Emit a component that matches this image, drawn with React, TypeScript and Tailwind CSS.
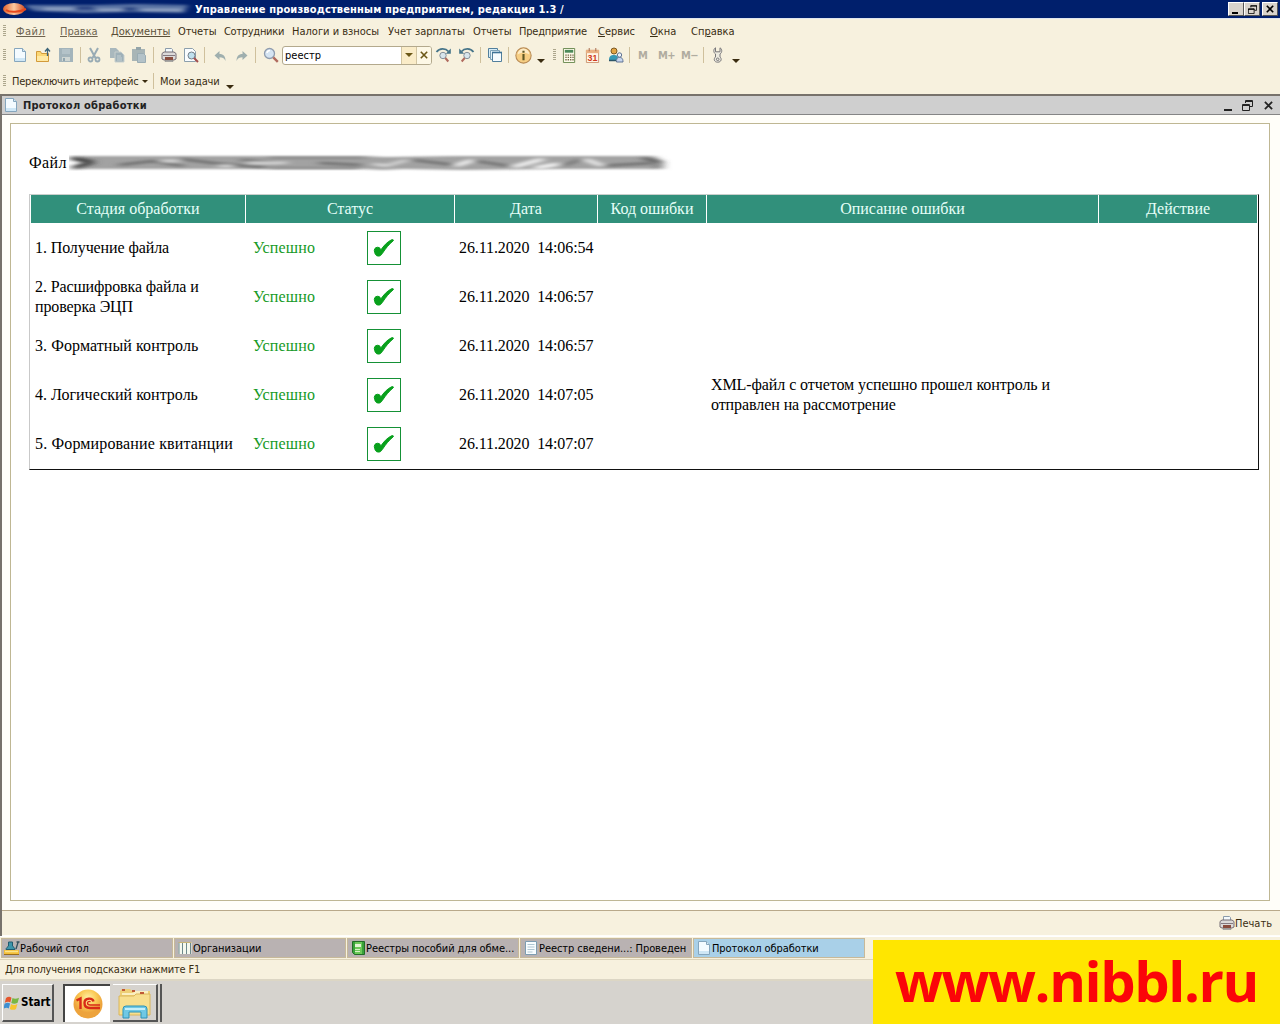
import type { ReactNode } from "react";
import clsx from "clsx";

const stages = [
  { name: "1. Получение файла", time: "14:06:54", tracking: "tracking-[-0.1px]" },
  { name: "2. Расшифровка файла и проверка ЭЦП", time: "14:06:57", tracking: "tracking-[-0.12px]" },
  { name: "3. Форматный контроль", time: "14:06:57", tracking: "tracking-[0.08px]" },
  {
    name: "4. Логический контроль",
    time: "14:07:05",
    tracking: "tracking-normal",
    note: "XML-файл с отчетом успешно прошел контроль и отправлен на рассмотрение",
  },
  { name: "5. Формирование квитанции", time: "14:07:07", tracking: "tracking-[0.15px]" },
];

const columns = ["Стадия обработки", "Статус", "Дата", "Код ошибки", "Описание ошибки", "Действие"];

const grid = "grid grid-cols-[216px_209px_143px_109px_392px_159px]";

function Svg({ children, size = 16 }: { children: ReactNode; size?: number }) {
  return (
    <svg width={size} height={size} viewBox="0 0 16 16" fill="none" className="shrink-0">
      {children}
    </svg>
  );
}

function PageIcon() {
  return (
    <Svg>
      <path d="M2.500 1.500h8l3 3v10h-11z" fill="#f4fbff" stroke="#86a6bd" />
      <path d="M3 11h10v3H3z" fill="#cfe7f6" />
      <path d="M10.500 1.500v3h3" fill="#d5e9f5" stroke="#86a6bd" />
    </Svg>
  );
}

function OpenIcon() {
  return (
    <Svg>
      <path d="M1.500 14.500v-10h4l1 2h7v8z" fill="#fbd774" stroke="#d29a3a" />
      <path d="M2 9h11v5H2z" fill="#ffe9a3" />
      <path d="M12.500 9V2M10 4.500l2.500-3 2.500 3" stroke="#3c6478" strokeWidth="1.300" />
    </Svg>
  );
}

function SaveIcon() {
  return (
    <Svg>
      <path d="M1 1h14v14H1z" fill="#a3b4bb" />
      <path d="M4 2h8v5H4z" fill="#b3c2c8" />
      <path d="M4 10h8v4H4z" fill="#cfd6d3" />
      <path d="M5 11h2v3H5z" fill="#91a5ae" />
    </Svg>
  );
}

function CutIcon() {
  return (
    <Svg>
      <path d="M4 1l5.500 10M12 1L6.500 11" stroke="#98abb4" strokeWidth="2" />
      <circle cx="4.500" cy="12.500" r="2" stroke="#98abb4" strokeWidth="1.800" />
      <circle cx="11.500" cy="12.500" r="2" stroke="#98abb4" strokeWidth="1.800" />
    </Svg>
  );
}

function CopyIcon() {
  return (
    <Svg>
      <path d="M1 1h6l3 3v7H1z" fill="#a9b8bd" />
      <path d="M6 5h6l3 3v7H6z" fill="#9eb0b8" stroke="#c7cfcd" />
      <path d="M8 9h4M8 11h5M8 13h5" stroke="#c4d0d3" />
    </Svg>
  );
}

function PasteIcon() {
  return (
    <Svg>
      <path d="M1 2h13v12H1z" fill="#a8b5b6" />
      <path d="M5 0h5v3H5z" fill="#93a4a9" />
      <path d="M6.500 6.500h6l2 2v7h-8z" fill="#b3c2c8" stroke="#9aacb3" />
    </Svg>
  );
}

function PrintIcon() {
  return (
    <Svg>
      <path d="M4.500 6V1.500h6l1 1V6" fill="#f4fafc" stroke="#8b9baa" />
      <path d="M1 6.500l2-1.500h10l2 1.500V12l-2 1H3l-2-1z" fill="#dcdad9" stroke="#756c74" />
      <path d="M2 8.500h12" stroke="#857a80" />
      <path d="M4 10h8v3H4z" fill="#8a4d3e" />
      <path d="M4 13.500h8v1H4z" fill="#eee" stroke="#777" strokeWidth=".6" />
    </Svg>
  );
}

function PreviewIcon() {
  return (
    <Svg>
      <path d="M1.500 1.500h8l3 3v10h-11z" fill="#fafdff" stroke="#8c9fac" />
      <circle cx="8.500" cy="8.500" r="3.500" fill="#bfe0ee" stroke="#767f88" />
      <path d="M11 11l4 4" stroke="#a34e4e" strokeWidth="2" />
    </Svg>
  );
}

function UndoIcon({ flip = false }: { flip?: boolean }) {
  return (
    <svg width="13" height="13" viewBox="0 0 13 13" className={clsx(flip && "-scale-x-100")}>
      <path d="M0.500 6.500L5.500 2v3c4 0 6 2.500 6 7-1.500-3-3-3.700-6-3.700V11z" fill="#9fafae" />
    </svg>
  );
}

function SearchIcon() {
  return (
    <Svg>
      <circle cx="6.500" cy="6.500" r="5" fill="#d5e4f2" stroke="#8f9cae" strokeWidth="1.300" />
      <path d="M4 6a3 3 0 0 1 3-2.500" stroke="#fff" strokeWidth="1.500" />
      <path d="M10.300 10.300l4.500 4.500" stroke="#b06a5e" strokeWidth="2.400" />
    </Svg>
  );
}

function FindIcon({ back = false }: { back?: boolean }) {
  return (
    <svg width="17" height="16" viewBox="0 0 17 16" fill="none" className={clsx(back && "-scale-x-100")}>
      <path d="M1.500 5c3-4 9-4 12-.5" stroke="#47758a" strokeWidth="1.800" />
      <path d="M15.800 1.500v5.300h-5z" fill="#47758a" />
      <circle cx="8" cy="8.500" r="3.200" fill="#d7e5ec" stroke="#85909a" />
      <path d="M10.300 11l3 3.500" stroke="#b06a5e" strokeWidth="2" />
    </svg>
  );
}

function WindowsIcon() {
  return (
    <Svg>
      <path d="M1.500 1.500h9v9h-9z" fill="#d7edf8" stroke="#527f9c" />
      <path d="M3.500 3.500h9v9h-9z" fill="#e4f4fb" stroke="#7fa3b9" />
      <path d="M5.500 5.500h9v9h-9z" fill="#f7fcff" stroke="#527f9c" />
      <path d="M5 5.500h10" stroke="#3e7397" strokeWidth="1.600" />
    </Svg>
  );
}

function InfoIcon() {
  return (
    <Svg size={17}>
      <circle cx="8" cy="8" r="7.200" fill="#f6ce83" stroke="#b78a55" />
      <path d="M2.500 7a5.500 5.500 0 0 1 11 0c-3-2-8-2-11 0z" fill="#fdebc5" />
      <path d="M7 3.500h2v2H7zM7 6.500h2v6H7z" fill="#5e5623" />
    </Svg>
  );
}

function CalcIcon() {
  return (
    <Svg size={15}>
      <path d="M1.500.5h12v15h-12z" fill="#fdfbe9" stroke="#66864d" />
      <path d="M3 2h9v3H3z" fill="#4b8a59" />
      <path d="M3.500 7.500h9M3.500 10h9M3.500 12.500h9" stroke="#78694a" strokeWidth="1.400" strokeDasharray="1.500 1" />
    </Svg>
  );
}

function CalendarIcon() {
  return (
    <Svg size={15}>
      <path d="M1.500 2.500h13v13h-13z" fill="#fff6e7" stroke="#cb9471" />
      <path d="M1 2h14v3.500H1z" fill="#e9b184" />
      <path d="M4.500 0v3.500M11.500 0v3.500" stroke="#a5674a" />
      <text x="8" y="14" textAnchor="middle" fill="#d03a20" className="font-['Liberation_Sans',sans-serif] text-[9.500px] font-bold">
        31
      </text>
    </Svg>
  );
}

function UsersIcon() {
  return (
    <Svg>
      <circle cx="6" cy="4" r="3" fill="#e3a544" stroke="#7b5925" />
      <path d="M1 13c0-4 2-5 5-5s4 1 4 3v2z" fill="#3698b4" />
      <path d="M1 13.500h7" stroke="#2c5568" strokeWidth="1.500" />
      <circle cx="11.500" cy="8" r="2.200" fill="#edf2fa" stroke="#5f7392" />
      <path d="M8.500 15c0-4 1-4.500 3-4.500s3.500.5 3.500 4.500z" fill="#c7d6ef" stroke="#5f7392" />
    </Svg>
  );
}

function WrenchIcon() {
  return (
    <Svg>
      <path
        d="M5.500.8v4h4.500v-4c2 1 2.600 4.500 0 6.200v3c2 1.600 1.500 5.200-2.300 5.200S3.400 11.600 5.500 10V7C3 5.300 3.500 1.800 5.500.8z"
        fill="#eceadf"
        stroke="#78777a"
      />
      <circle cx="7.700" cy="12.300" r="1.300" stroke="#78777a" />
    </Svg>
  );
}

function RegisterIcon() {
  return (
    <Svg>
      <path d="M2.500 1.500h12v13h-10l-2-2z" fill="#39a23b" stroke="#236c28" />
      <path d="M5 2h7v12H5z" fill="#6cca59" />
      <path d="M5 4h6v3H5z" fill="#e2f5d4" />
      <path d="M5 9.500h5M5 11.500h5" stroke="#d6f2c6" />
    </Svg>
  );
}

function ListIcon() {
  return (
    <Svg>
      <path d="M2.500 1.500h11v13h-11z" fill="#f8fdff" stroke="#7d9db2" />
      <path d="M4.500 4.500h7M4.500 7h7M4.500 9.500h7M4.500 12h5" stroke="#afc6d2" />
    </Svg>
  );
}

function ColumnsIcon() {
  return (
    <Svg>
      <path d="M1.500 2h13v12h-13z" fill="#f5f9ee" />
      <path d="M2 2v12M5.500 2v12M9.500 2v12M13.500 2v12" stroke="#6e8a8c" />
      <path d="M1.500 2.500h13" stroke="#c8b475" />
    </Svg>
  );
}

function DesktopIcon() {
  return (
    <Svg>
      <path d="M0 10h15v4.500H0z" fill="#f3be38" />
      <path d="M0 14.500h15" stroke="#996d1c" />
      <path d="M1 11.500h13" stroke="#fae48d" strokeWidth="1.500" />
      <path d="M2 9.500c0-2 2-2.500 2.500-3.500V2h4v4c.5 1 2.500 1.500 2.500 3.500z" fill="#3c95ab" stroke="#205a6f" />
      <path d="M12 9l2-6.500M12.500 2h3" stroke="#35505e" strokeWidth="1.300" />
    </Svg>
  );
}

function Restore({ size }: { size: number }) {
  return (
    <svg width={size} height={size} viewBox="0 0 11 11" fill="none" stroke="currentColor">
      <path d="M3.500 3V.500h7v6H8M3 1.500h8" />
      <path d="M.500 4.500h7v6h-7zM0 5.500h8" />
    </svg>
  );
}

function Cross({ size }: { size: number }) {
  return (
    <svg width={size} height={size} viewBox="0 0 10 10" stroke="currentColor" strokeWidth="2">
      <path d="M1 1l8 8M9 1L1 9" />
    </svg>
  );
}

function Arrow() {
  return <span className="h-0 w-0 border-x-4 border-t-4 border-x-transparent border-t-[#3a2c10]" />;
}

function Grip() {
  return (
    <svg width="3" height="12" className="shrink-0">
      <path d="M1.500 0v12" stroke="#aca68c" strokeWidth="3" strokeDasharray="1 1" />
    </svg>
  );
}

function Cell({ w, children }: { w: string; children?: ReactNode }) {
  return <span className={clsx("flex h-full shrink-0 items-center justify-center", w)}>{children}</span>;
}

function Sep({ w }: { w: string }) {
  return (
    <Cell w={w}>
      <span className="h-4 w-px bg-[#cfc09c]" />
    </Cell>
  );
}

function TitleButton({ children, className }: { children: ReactNode; className?: string }) {
  return (
    <span
      className={clsx(
        "flex h-[14px] w-[16px] items-center justify-center border border-t-white border-r-[#555] border-b-[#555] border-l-white bg-[#d8d3cc] text-black",
        className,
      )}
    >
      {children}
    </span>
  );
}

function TitleBar() {
  return (
    <header className="flex h-[18px] items-center bg-[#001f6c] pr-[2px] text-white">
      <svg width="195" height="18" className="shrink-0">
        <defs>
          <filter id="soft" x="-10%" y="-60%" width="120%" height="220%">
            <feGaussianBlur stdDeviation="3 0.900" />
          </filter>
          <linearGradient id="flame">
            <stop offset="0" stopColor="#e2622c" />
            <stop offset=".5" stopColor="#fbc9a0" />
            <stop offset="1" stopColor="#d64d20" />
          </linearGradient>
        </defs>
        <g filter="url(#soft)">
          <path d="M24 5h52l20 0 40-1 52 1-4 8-50-1-50 1-50-2z" fill="#5a73a4" />
          <path d="M44 9h30M98 10h24M142 10h40" stroke="#93a5c4" strokeWidth="2.500" />
          <path d="M76 8h18M124 9h12" stroke="#2a4785" strokeWidth="4" />
        </g>
        <ellipse cx="14" cy="9" rx="11" ry="6" fill="url(#flame)" />
        <path d="M6 10c4 3 14 2 20-1" stroke="#e8481c" strokeWidth="2" fill="none" />
      </svg>
      <span className="text-[11px] font-bold tracking-[0.16px] whitespace-nowrap">
        Управление производственным предприятием, редакция 1.3 /
      </span>
      <div className="ml-auto flex">
        <TitleButton>
          <span className="mt-[7px] mr-[2px] h-[2px] w-[6px] bg-black" />
        </TitleButton>
        <TitleButton>
          <Restore size={9} />
        </TitleButton>
        <TitleButton className="ml-[2px]">
          <Cross size={8} />
        </TitleButton>
      </div>
    </header>
  );
}

function Menu() {
  return (
    <nav className="flex h-[24px] items-center border-t border-[#dfe5ee] pt-px pl-[3px] whitespace-nowrap">
      <span className="w-[13px]">
        <Grip />
      </span>
      <span className="w-[44px] tracking-[0.5px] text-[#6d6350] underline">Файл</span>
      <span className="w-[51px] text-[#6d6350] underline">Правка</span>
      <span className="w-[67px] text-[#5a4f38] underline">Документы</span>
      <span className="w-[46px] tracking-[-0.1px]">Отчеты</span>
      <span className="w-[68px] tracking-[-0.3px]">Сотрудники</span>
      <span className="w-[96px]">Налоги и взносы</span>
      <span className="w-[85px]">Учет зарплаты</span>
      <span className="w-[46px] tracking-[-0.1px]">Отчеты</span>
      <span className="w-[79px] tracking-[-0.2px]">Предприятие</span>
      <span className="w-[52px]">
        <u>С</u>ервис
      </span>
      <span className="w-[41px]">
        <u>О</u>кна
      </span>
      <span>
        Сп<u>р</u>авка
      </span>
    </nav>
  );
}

function Toolbar() {
  return (
    <div className="flex h-[26px] items-center">
      <Cell w="w-[9px]"><Grip /></Cell>
      <Cell w="w-[22px]"><PageIcon /></Cell>
      <Cell w="w-[24px]"><OpenIcon /></Cell>
      <Cell w="w-[21px]"><SaveIcon /></Cell>
      <Sep w="w-[8px]" />
      <Cell w="w-[20px]"><CutIcon /></Cell>
      <Cell w="w-[25px]"><CopyIcon /></Cell>
      <Cell w="w-[20px]"><PasteIcon /></Cell>
      <Sep w="w-[8px]" />
      <Cell w="w-[23px]"><PrintIcon /></Cell>
      <Cell w="w-[21px]"><PreviewIcon /></Cell>
      <Sep w="w-[7px]" />
      <Cell w="w-[24px]"><UndoIcon /></Cell>
      <Cell w="w-[18px]"><UndoIcon flip /></Cell>
      <Sep w="w-[10px]" />
      <Cell w="w-[22px]"><SearchIcon /></Cell>
      <div className="flex h-[19px] w-[150px] items-stretch overflow-hidden rounded-[3px] border border-[#b3a98d] bg-white text-black">
        <span className="flex flex-1 items-center pl-[2px]">реестр</span>
        <span className="flex w-[15px] items-center justify-center border-l border-[#d2c5a2] bg-[#faecc8]">
          <span className="h-0 w-0 border-x-4 border-t-4 border-x-transparent border-t-[#6b5716]" />
        </span>
        <span className="flex w-[15px] items-center justify-center border-l border-[#d2c5a2] bg-[#fdf8e6] text-[#6b5716]">
          <Cross size={8} />
        </span>
      </div>
      <Cell w="w-[23px]"><FindIcon /></Cell>
      <Cell w="w-[22px]"><FindIcon back /></Cell>
      <Sep w="w-[7px]" />
      <Cell w="w-[21px]"><WindowsIcon /></Cell>
      <Sep w="w-[7px]" />
      <Cell w="w-[22px]"><InfoIcon /></Cell>
      <Cell w="w-[13px] pt-3"><Arrow /></Cell>
      <Cell w="w-[14px]"><Grip /></Cell>
      <Cell w="w-[17px]"><CalcIcon /></Cell>
      <Cell w="w-[28px]"><CalendarIcon /></Cell>
      <Cell w="w-[20px]"><UsersIcon /></Cell>
      <Sep w="w-[7px]" />
      <Cell w="w-[20px] font-bold text-[#b0aca0]">M</Cell>
      <Cell w="w-[27px] font-bold text-[#b0aca0] tracking-[-0.5px]">M+</Cell>
      <Cell w="w-[19px] font-bold text-[#b0aca0] tracking-[-0.5px]">M−</Cell>
      <Sep w="w-[9px]" />
      <Cell w="w-[20px]"><WrenchIcon /></Cell>
      <Cell w="w-[15px] pt-3"><Arrow /></Cell>
    </div>
  );
}

function TaskRow() {
  return (
    <div className="flex h-[26px] items-center whitespace-nowrap">
      <Cell w="w-[9px]"><Grip /></Cell>
      <span className="w-[131px] pl-[3px] tracking-[-0.22px]">Переключить интерфейс</span>
      <Cell w="w-[9px]">
        <span className="h-0 w-0 border-x-[3px] border-t-[3px] border-x-transparent border-t-[#3a2c10]" />
      </Cell>
      <Sep w="w-[8px]" />
      <span className="w-[67px] pl-[3px] tracking-[-0.1px]">Мои задачи</span>
      <Cell w="w-[11px] pt-3"><Arrow /></Cell>
    </div>
  );
}

/* File name is hidden behind a smudge */
function Smudge() {
  return (
    <svg width="604" height="24" viewBox="0 0 604 24" className="ml-[2px]">
      <defs>
        <filter id="smear" x="-5%" y="-30%" width="110%" height="160%">
          <feGaussianBlur stdDeviation="5 0.800" />
        </filter>
      </defs>
      <path d="M4 5h292l20 1 70-1 130 0 70 0 8 6v7l-50 0-60 0-90 1-60-1-20 1-20-1H6l10-6z" fill="#a2a2a2" filter="url(#smear)" />
      <g filter="url(#smear)" strokeWidth="3" fill="none">
        <path d="M2 7l22 4-20 6" stroke="#444" strokeWidth="4" />
        <path d="M50 14l34-4 30 5M112 8l40 5 44 3M172 9l46 4" stroke="#747474" />
        <path d="M200 7h96M200 17h90" stroke="#8a8a8a" strokeWidth="2" />
        <path d="M250 12l42 2M344 9l42 5" stroke="#777" />
        <path d="M400 9l40 6M492 15l22-7M530 15l54-3" stroke="#777" />
        <path d="M92 10h18M150 15h14M178 12h40M304 13l16 2M320 14l18-5" stroke="#d6d6d6" />
        <path d="M386 15l18-6M444 16l30-8M466 17l24-4M516 8l18 7" stroke="#f0f0f0" strokeWidth="4" />
        <path d="M574 7l16 4-2 6" stroke="#555" strokeWidth="2.500" />
      </g>
    </svg>
  );
}

function StageTable() {
  return (
    <section className="ml-[18px] h-[276px] w-[1230px] border-t border-r border-b border-l border-t-[#c9cfcc] border-r-[#111] border-b-[#111] border-l-[#c9c9c9]">
      <div className={clsx(grid, "h-[28px]")}>
        {columns.map((c) => (
          <span
            key={c}
            className="flex items-center justify-center border-r border-white bg-[#31907b] text-[#e6fff8] first:border-l"
          >
            {c}
          </span>
        ))}
      </div>
      {stages.map((s) => (
        <div key={s.name} className={clsx(grid, "h-[49px] items-center leading-5")}>
          <span className={clsx("px-[5px]", s.tracking)}>{s.name}</span>
          <div className="flex items-center pl-[7px] text-[#169a26]">
            <span className="w-[114px] tracking-[0.15px]">Успешно</span>
            <span className="flex h-[34px] w-[34px] items-center justify-center border border-[#159136]">
              <svg width="22" height="20" viewBox="0 0 22 20">
                <path
                  d="M1.300 12.500C1.200 9.800 4 8.600 6.200 9.600c1 .6 1.200 1.600 1.500 2.600C10.500 8 14 4 18.500 1.800c1.200-.5 2.400 0 1.800.9-4.500 3.800-7.500 7.500-11 12.800-1.200 1.800-2 2.600-4 2.600-2.800 0-3.600-2.700-4-5.600z"
                  fill="#08a01c"
                  stroke="#08a01c"
                />
              </svg>
            </span>
          </div>
          <span className="pl-1 tracking-[-0.1px] whitespace-pre">{`26.11.2020  ${s.time}`}</span>
          <span />
          <span className="pr-8 pl-1 tracking-[-0.08px]">{s.note}</span>
          <span />
        </div>
      ))}
    </section>
  );
}

function WindowTab({ icon, children, className }: { icon: ReactNode; children: ReactNode; className?: string }) {
  return (
    <span
      className={clsx(
        "flex h-[20px] w-[172px] shrink-0 items-center overflow-hidden border border-[#c7b999] pl-[2px] tracking-[-0.07px] whitespace-nowrap text-black",
        className ?? "bg-[#b9b2b2]",
      )}
    >
      {icon}
      {children}
    </span>
  );
}

function Taskbar() {
  return (
    <footer className="flex h-[43px] items-start bg-[#d6d3ce] pt-[3px] pl-[2px]">
      <span className="flex h-[38px] w-[52px] items-center gap-[1px] border-t border-r-2 border-b-2 border-l border-t-white border-r-[#555] border-b-[#555] border-l-white pl-px text-[11.5px] font-bold text-black">
        <svg width="16" height="16" viewBox="0 0 16 16">
          <path d="M2 3c2-1.500 4-1.500 5.500-.3L6.300 7.500C5 6.500 3 6.500.8 7.800z" fill="#e5562c" />
          <path d="M8.500 3c2 1.200 4 1 6.500-.3l-1.400 5c-2 1.300-4.500 1.300-6.300.2z" fill="#78b743" />
          <path d="M.5 8.800c2-1.300 4-1.300 5.600-.2l-1.300 5c-1.500-1-3.500-1-5.300.2z" fill="#3f8fd0" />
          <path d="M7 9c2 1.200 4 1.200 6.400 0L12 14c-2 1.300-4.500 1-6.200 0z" fill="#f7c52f" />
        </svg>
        Start
      </span>
      <span className="ml-[9px] flex h-[38px] w-[47px] items-center justify-center border-t-2 border-l-2 border-[#444] bg-white">
        <svg width="30" height="30" viewBox="0 0 30 30" fill="none">
          <defs>
            <radialGradient id="sun" cy=".3">
              <stop offset="0" stopColor="#fff1a6" />
              <stop offset=".6" stopColor="#fac955" />
              <stop offset="1" stopColor="#eda33c" />
            </radialGradient>
          </defs>
          <circle cx="15" cy="15" r="14.500" fill="url(#sun)" />
          <path d="M3.500 11.500l4-2V20M20.500 12.500c-1-4-9-4-9 1.500 0 3.500 2.500 5 5.500 5h10" stroke="#d82a17" strokeWidth="2.400" />
          <path d="M17.500 13c-1-1-3-.5-3 1s1 2 3 2h9.500" stroke="#d82a17" strokeWidth="1.300" />
        </svg>
      </span>
      <span className="ml-[3px] flex h-[38px] w-[45px] items-center justify-center border-t border-r-2 border-b-2 border-t-white border-r-[#555] border-b-[#555]">
        <svg width="34" height="32" viewBox="0 0 34 32">
          <path d="M2 4l2-2h8l2 2h18v24H2z" fill="#eecf76" />
          <path d="M4 6h11l2-2h13v4H4z" fill="#fbefc0" />
          <path d="M1 9h15l2-2h14v21H1z" fill="#f8df8e" stroke="#dab65b" />
          <path d="M4 3h3M14 4h3M22 6h4" stroke="#bf5836" strokeWidth="2" />
          <path d="M5 31V22q0-3 3-3h18q3 0 3 3v9h-6v-6H11v6z" fill="#6fc8e4" stroke="#2d93b8" />
          <path d="M7 22h20" stroke="#c5effa" strokeWidth="2" />
        </svg>
      </span>
      <span className="ml-[2px] h-[38px] w-[2px] bg-[#555]" />
    </footer>
  );
}

export default function App() {
  return (
    <div className="relative flex h-[1024px] w-[1280px] flex-col overflow-hidden bg-[#f7f1de] font-['DejaVu_Sans_Condensed','Liberation_Sans',sans-serif] text-[11px] leading-none text-[#392d12]">
      <TitleBar />
      <Menu />
      <Toolbar />
      <TaskRow />

      <main className="flex h-[842px] flex-col border-t-2 border-l-2 border-[#77726b] bg-[#fffef9]">
        <div className="flex h-[19px] shrink-0 items-center border-b border-[#858585] bg-[#cfcfcf] pr-[7px] pl-px font-bold text-[#222]">
          <PageIcon />
          <span className="ml-[4px] tracking-[0.24px]">Протокол обработки</span>
          <span className="mt-[9px] ml-auto h-[2px] w-[8px] bg-[#222]" />
          <span className="ml-[10px]">
            <Restore size={11} />
          </span>
          <span className="ml-[11px]">
            <Cross size={9} />
          </span>
        </div>

        <div className="mt-[8px] ml-[8px] h-[778px] w-[1260px] shrink-0 border border-[#bfb793] bg-white font-['Liberation_Serif',serif] text-[16px] text-black">
          <div className="mt-[27px] ml-[18px] flex h-[24px] items-center">
            <span className="w-[38px] tracking-[0.4px]">Файл</span>
            <Smudge />
          </div>
          <div className="h-[19px]" />
          <StageTable />
        </div>

        <div className="mt-[9px] flex h-[25px] items-center justify-end border-t border-[#b9a98a] bg-[#f7f1de] pr-[8px]">
          <PrintIcon />
          Печать
        </div>
      </main>

      <div className="flex h-[24px] items-center gap-px border-t border-b border-t-white border-b-[#ddd3b8] pl-px">
        <WindowTab icon={<DesktopIcon />}>Рабочий стол</WindowTab>
        <WindowTab icon={<ColumnsIcon />}>Организации</WindowTab>
        <WindowTab icon={<RegisterIcon />}>Реестры пособий для обме...</WindowTab>
        <WindowTab icon={<ListIcon />}>Реестр сведени...: Проведен</WindowTab>
        <WindowTab icon={<PageIcon />} className="bg-[#a9d0e8]">Протокол обработки</WindowTab>
      </div>
      <div className="flex h-[21px] items-center border-b-2 border-[#dcd6c4] pl-[5px] tracking-[-0.2px]">
        Для получения подсказки нажмите F1
      </div>
      <Taskbar />

      <div className="absolute right-0 bottom-0 flex h-[84px] w-[407px] items-center justify-center bg-[#ffe600] pb-[5px] font-['Open_Sans',sans-serif] text-[56px] font-bold tracking-[-1.4px] text-[#fb0509]">
        www.nibbl.ru
      </div>
    </div>
  );
}
